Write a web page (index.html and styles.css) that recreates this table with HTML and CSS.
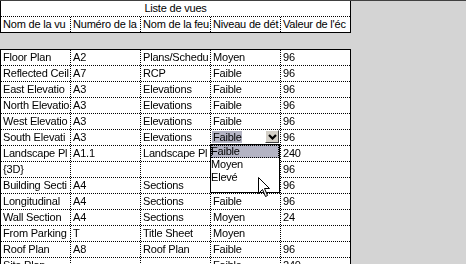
FILE: index.html
```html
<!DOCTYPE html>
<html lang="fr">
<head>
<meta charset="utf-8">
<title>Liste de vues</title>
<link rel="stylesheet" href="styles.css">
</head>
<body>
<div class="frame">
  <div class="sheet head">
    <div class="title">Liste de vues</div>
    <div class="row hdr">
      <div class="c">Nom de la vu</div>
      <div class="c">Numéro de la</div>
      <div class="c">Nom de la feu</div>
      <div class="c">Niveau de dét</div>
      <div class="c">Valeur de l'éc</div>
    </div>
  </div>
  <div class="gap"></div>
  <div class="sheet grid">
    <div class="row"><div class="c">Floor Plan</div><div class="c">A2</div><div class="c">Plans/Schedu</div><div class="c">Moyen</div><div class="c">96</div></div>
    <div class="row"><div class="c">Reflected Ceil</div><div class="c">A7</div><div class="c">RCP</div><div class="c">Faible</div><div class="c">96</div></div>
    <div class="row"><div class="c">East Elevatio</div><div class="c">A3</div><div class="c">Elevations</div><div class="c">Faible</div><div class="c">96</div></div>
    <div class="row"><div class="c">North Elevatio</div><div class="c">A3</div><div class="c">Elevations</div><div class="c">Faible</div><div class="c">96</div></div>
    <div class="row"><div class="c">West Elevatio</div><div class="c">A3</div><div class="c">Elevations</div><div class="c">Faible</div><div class="c">96</div></div>
    <div class="row"><div class="c">South Elevati</div><div class="c">A3</div><div class="c">Elevations</div>
      <div class="c combo">
        <span class="sel">Faible</span>
        <span class="btn"><svg width="9" height="6" viewBox="0 0 9 6"><path d="M1 1 L4.5 4.5 L8 1" fill="none" stroke="#000" stroke-width="2.2"/></svg></span>
        <div class="list">
          <div class="opt cur">Faible</div>
          <div class="opt">Moyen</div>
          <div class="opt">Elevé</div>
        </div>
      </div>
      <div class="c">96</div></div>
    <div class="row"><div class="c">Landscape Pl</div><div class="c">A1.1</div><div class="c">Landscape Pl</div><div class="c"></div><div class="c">240</div></div>
    <div class="row"><div class="c">{3D}</div><div class="c"></div><div class="c"></div><div class="c"></div><div class="c">96</div></div>
    <div class="row"><div class="c">Building Secti</div><div class="c">A4</div><div class="c">Sections</div><div class="c"></div><div class="c">96</div></div>
    <div class="row"><div class="c">Longitudinal</div><div class="c">A4</div><div class="c">Sections</div><div class="c">Faible</div><div class="c">96</div></div>
    <div class="row"><div class="c">Wall Section</div><div class="c">A4</div><div class="c">Sections</div><div class="c">Moyen</div><div class="c">24</div></div>
    <div class="row"><div class="c">From Parking</div><div class="c">T</div><div class="c">Title Sheet</div><div class="c">Moyen</div><div class="c"></div></div>
    <div class="row"><div class="c">Roof Plan</div><div class="c">A8</div><div class="c">Roof Plan</div><div class="c">Faible</div><div class="c">96</div></div>
    <div class="row"><div class="c">Site Plan</div><div class="c"></div><div class="c"></div><div class="c">Faible</div><div class="c">240</div></div>
  </div>
  <svg class="cursor" width="13" height="21" viewBox="0 0 13 21"><path d="M0.5 0.5 L0.5 16.5 L4.5 12.5 L7.5 19.5 L9.5 18.5 L6.5 11.5 L11.5 11.5 Z" fill="#fff" stroke="#000" stroke-width="1"/></svg>
</div>
</body>
</html>
```
FILE: styles.css
```css
html, body {
  margin: 0;
  padding: 0;
}
body {
  width: 466px;
  height: 264px;
  overflow: hidden;
  background: #d4d4d4;
  font-family: "Liberation Sans", Arial, sans-serif;
  font-size: 11px;
  color: #000;
}
.frame {
  position: relative;
  border-top: 1px solid #404040;
}
.sheet {
  width: 351px;
  box-sizing: border-box;
  border-left: 1px solid #000;
  border-right: 1px solid #000;
  background: #fff;
  color: #000;
}
.head {
  border-bottom: 1px solid #000;
}
.title {
  height: 15px;
  line-height: 15px;
  text-align: center;
  border-bottom: 1px dotted #000;
  letter-spacing: -0.2px;
}
.gap {
  height: 16px;
}
.grid {
  border-top: 1px solid #000;
  will-change: transform;
}
.row {
  display: grid;
  grid-template-columns: 70px 70px 70px 70px 69px;
  height: 16px;
  box-sizing: border-box;
  border-bottom: 1px dotted #000;
  color: #000;
}
.hdr {
  border-bottom: none;
  height: 15px;
}
.c {
  box-sizing: border-box;
  height: 15px;
  line-height: 15px;
  padding-left: 2px;
  white-space: nowrap;
  overflow: hidden;
  border-right: 1px dotted #000;
  letter-spacing: -0.2px;
  color: #000;
}
.c:last-child {
  border-right: none;
}
.combo {
  position: relative;
  overflow: visible;
  padding-left: 1px;
  display: flex;
  align-items: flex-start;
}
.sel {
  margin-top: 1px;
  height: 12px;
  line-height: 12px;
  padding: 0 1px;
  width: 28px;
  background: #b4b4c4;
}
.btn {
  margin-left: auto;
  margin-right: 1px;
  width: 14px;
  height: 13px;
  box-sizing: border-box;
  background: #d4d0c8;
  border-top: 1px solid #fff;
  border-left: 1px solid #fff;
  border-right: 1px solid #404040;
  border-bottom: 1px solid #404040;
  display: flex;
  align-items: center;
  justify-content: center;
}
.list {
  position: absolute;
  left: -1px;
  top: 14px;
  width: 70px;
  height: 49px;
  box-sizing: border-box;
  border: 1px solid #000;
  background: #fff;
}
.opt {
  height: 13px;
  line-height: 13px;
  letter-spacing: -0.2px;
  color: #000;
}
.cur {
  background: #b4b4c4;
  outline: 1px dotted #000;
  outline-offset: -1px;
}
.cursor {
  position: absolute;
  left: 258px;
  top: 176px;
}
```
